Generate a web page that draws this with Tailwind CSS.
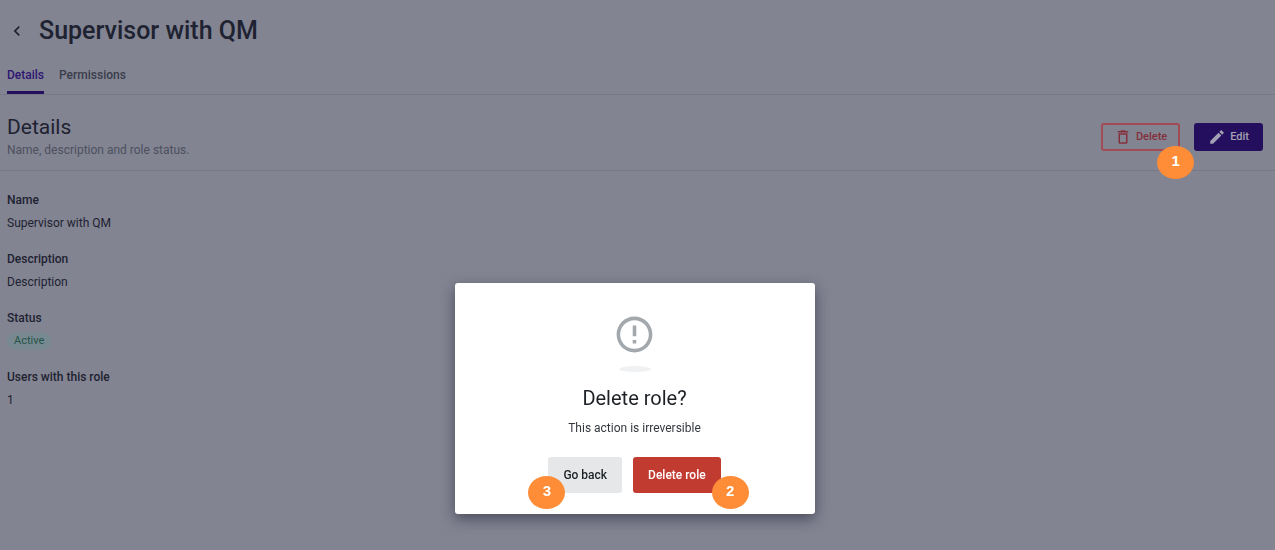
<!DOCTYPE html>
<html lang="en">
<head>
  <meta charset="UTF-8">
  <meta name="viewport" content="width=device-width, initial-scale=1.0">
  <title>Supervisor with QM</title>
  <script src="https://cdn.jsdelivr.net/npm/@tailwindcss/browser@4"></script>
</head>
<body class="bg-[#828492] text-[#1e2231] min-h-screen font-[Roboto,sans-serif] text-[12px] leading-[18px]">

  <!-- Header -->
  <header class="flex items-center gap-3 h-[60px] px-[7px] pt-px">
    <button type="button" aria-label="Back" class="w-5 h-5 flex items-center justify-center">
      <svg viewBox="0 0 24 24" class="w-5 h-5" fill="currentColor"><path d="M15.41 7.41 14 6l-6 6 6 6 1.41-1.41L10.83 12z"/></svg>
    </button>
    <h1 class="text-[25px] leading-8 font-medium">Supervisor with QM</h1>
  </header>

  <!-- Tabs -->
  <nav class="flex gap-[15px] px-[7px] h-[35px] border-b border-[#777987]">
    <a href="#details" class="pt-[6px] font-medium text-[#2f1672] border-b-3 border-[#230f5e]">Details</a>
    <a href="#permissions" class="pt-[6px] font-medium text-[#3a3d4b]">Permissions</a>
  </nav>

  <main>
    <section class="flex items-center justify-between h-[76px] pl-[7px] pr-3 pb-px border-b border-[#777987]">
      <div class="pt-2">
        <h2 class="text-[21px] leading-7">Details</h2>
        <p class="text-[#4d505e]">Name, description and role status.</p>
      </div>
      <div class="flex gap-[14px] pt-[10px]">
        <div class="relative">
          <button type="button" class="flex items-center gap-1 h-7 px-[11px] rounded-[3px] border-2 border-[#a04b55] text-[#84303b] text-[11px] font-medium">
            <svg viewBox="0 0 24 24" class="w-[18px] h-[18px]" fill="currentColor"><path d="M6 19c0 1.100.9 2 2 2h8c1.100 0 2-.9 2-2V7H6v12zM8 9h8v10H8V9zm7.500-5-1-1h-5l-1 1H5v2h14V4z"/></svg>
            Delete
          </button>
          <span class="absolute z-10 -right-[14px] -bottom-[28px] w-[37px] h-[33px] pb-1 rounded-[50%] bg-[#ff8d37] text-white text-[15px] font-bold font-['Liberation_Sans',sans-serif] flex items-center justify-center">1</span>
        </div>
        <button type="button" class="flex items-center gap-1 h-7 px-[14px] rounded-[3px] bg-[#230f5e] text-[#a3a1b3] text-[11px] font-medium">
          <svg viewBox="0 0 24 24" class="w-[18px] h-[18px]" fill="currentColor"><path d="M3 17.250V21h3.750L17.810 9.940l-3.750-3.750L3 17.250zM20.710 7.040a1 1 0 0 0 0-1.410l-2.340-2.340a1 1 0 0 0-1.410 0l-1.830 1.830 3.750 3.750 1.830-1.830z"/></svg>
          Edit
        </button>
      </div>
    </section>

    <!-- Role fields -->
    <dl class="flex flex-col gap-[18px] px-[7px] pt-5">
      <div class="flex flex-col gap-[5px]">
        <dt class="font-medium">Name</dt>
        <dd>Supervisor with QM</dd>
      </div>
      <div class="flex flex-col gap-[5px]">
        <dt class="font-medium">Description</dt>
        <dd>Description</dd>
      </div>
      <div class="flex flex-col gap-[5px]">
        <dt class="font-medium">Status</dt>
        <dd class="flex"><span class="px-[7px] rounded-full bg-[#788991] text-[#245548] text-[11px]">Active</span></dd>
      </div>
      <div class="flex flex-col gap-[5px]">
        <dt class="font-medium">Users with this role</dt>
        <dd>1</dd>
      </div>
    </dl>
  </main>

  <!-- Confirm dialog -->
  <div class="fixed inset-0 flex items-end justify-center pb-9 pr-[6px]">
    <div role="dialog" aria-modal="true" aria-labelledby="dialog-title" class="w-[360px] max-w-full flex flex-col items-center pt-[30px] pb-[21px] rounded-[3px] bg-white shadow-[0_5px_14px_rgba(20,22,40,0.5)]">
      <svg viewBox="0 0 24 24" class="w-[43px] h-[43px]" fill="#a3a8ad"><path d="M11 15h2v2h-2zm0-8h2v6h-2zm.990-5C6.470 2 2 6.480 2 12s4.470 10 9.990 10C17.520 22 22 17.520 22 12S17.520 2 11.990 2zM12 20c-4.420 0-8-3.580-8-8s3.580-8 8-8 8 3.580 8 8-3.580 8-8 8z"/></svg>
      <div class="mt-[10px] w-8 h-[6px] rounded-[50%] bg-[#f0f1f3]"></div>
      <h2 id="dialog-title" class="mt-[14px] text-[20px] leading-6 text-[#1d2126]">Delete role?</h2>
      <p class="mt-[9px] text-[#33383e]">This action is irreversible</p>
      <div class="mt-5 flex gap-[11px]">
        <div class="relative">
          <button type="button" class="h-9 px-[15px] rounded-[3px] bg-[#e5e7e9] text-[#1d2126] font-medium">Go back</button>
          <span class="absolute -left-5 -bottom-4 w-[37px] h-[33px] pb-1 rounded-[50%] bg-[#ff8d37] text-white text-[15px] font-bold font-['Liberation_Sans',sans-serif] flex items-center justify-center">3</span>
        </div>
        <div class="relative">
          <button type="button" class="h-9 px-[15px] rounded-[3px] bg-[#c23b31] text-white font-medium">Delete role</button>
          <span class="absolute -right-7 -bottom-4 w-[37px] h-[33px] pb-1 rounded-[50%] bg-[#ff8d37] text-white text-[15px] font-bold font-['Liberation_Sans',sans-serif] flex items-center justify-center">2</span>
        </div>
      </div>
    </div>
  </div>

</body>
</html>
